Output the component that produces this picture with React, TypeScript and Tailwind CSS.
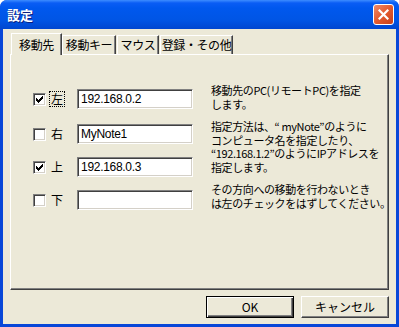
const FONT = { fontFamily: '"Noto Sans CJK JP", "Liberation Sans", sans-serif' };

interface Row {
  label: string;
  value: string;
  checked: boolean;
  focused?: boolean;
}

const ROWS: Row[] = [
  { label: "左", value: "192.168.0.2", checked: true, focused: true },
  { label: "右", value: "MyNote1", checked: false },
  { label: "上", value: "192.168.0.3", checked: true },
  { label: "下", value: "", checked: false },
];

const TABS = [
  { label: "移動先", width: "w-[51px]" },
  { label: "移動キー", width: "w-[54px]" },
  { label: "マウス", width: "w-[42px]" },
  { label: "登録・その他", width: "w-[73px]" },
];

function Check({ checked }: { checked: boolean }) {
  return (
    <div className="flex h-[13px] w-[13px] items-center justify-center border border-t-[#808080] border-l-[#808080] border-r-white border-b-white bg-white shadow-[inset_1px_1px_0_#404040,inset_-1px_-1px_0_#d4d0c8]">
      {checked ? (
        <svg width="7" height="7" viewBox="0 0 7 7" shapeRendering="crispEdges">
          <path d="M6 0h1v3h-1zM5 1h1v3h-1zM4 2h1v3h-1zM3 3h1v3h-1zM2 4h1v3h-1zM1 3h1v3h-1zM0 2h1v3h-1z" fill="#000" />
        </svg>
      ) : null}
    </div>
  );
}

function XpButton({ children, isDefault }: { children: string; isDefault?: boolean }) {
  return (
    <div
      className={[
        "flex h-[22px] w-[88px] items-center justify-center bg-[#ece9d8] text-[12px] text-black",
        isDefault
          ? "border border-black shadow-[inset_1px_1px_0_#fff,inset_-1px_-1px_0_#404040,inset_-2px_-2px_0_#808080]"
          : "border border-t-white border-l-white border-r-[#404040] border-b-[#404040] shadow-[inset_-1px_-1px_0_#808080]",
      ].join(" ")}
    >
      {children}
    </div>
  );
}

export default function App() {
  return (
    <div className="h-[327px] w-[399px] bg-white" style={FONT}>
      <div className="flex h-full w-full flex-col overflow-hidden rounded-t-[7px] bg-[#0847d8]">
        {/* title bar */}
        <div className="flex h-[29px] shrink-0 items-center justify-between bg-[linear-gradient(to_bottom,#3d8dff_0px,#0a5df5_3px,#0058ee_8px,#0055e5_20px,#0046d0_29px)] pl-[7px] pr-[5px]">
          <span className="text-[13px] font-bold text-white [text-shadow:1px_1px_0_#0a1e80]">設定</span>
          <div className="flex h-[21px] w-[21px] items-center justify-center rounded-[3px] border border-white bg-[linear-gradient(135deg,#f08a6a,#e35a2e_50%,#c8401a)]">
            <svg width="11" height="11" viewBox="0 0 11 11">
              <path d="M1.5 1.5l8 8M9.5 1.5l-8 8" stroke="#fff" strokeWidth="2.2" strokeLinecap="square" />
            </svg>
          </div>
        </div>

        {/* client */}
        <div className="mx-[3px] mb-[3px] flex flex-1 flex-col bg-[#ece9d8] px-[7px] text-[12px] text-black">
          <div className="flex h-[25px] items-end pl-[1px]">
            {TABS.map((tab, i) =>
              i === 0 ? (
                <div
                  key={tab.label}
                  className={[
                    "relative z-10 -mb-[1px] -mr-[1px] flex h-[22px] items-center justify-center whitespace-nowrap border border-b-0 border-t-white border-l-white border-r-[#404040] bg-[#ece9d8] text-[12px] leading-[14px] tracking-[-0.4px] shadow-[inset_-1px_0_0_#808080]",
                    tab.width,
                  ].join(" ")}
                >
                  {tab.label}
                </div>
              ) : (
                <div
                  key={tab.label}
                  className={[
                    "ml-[1px] flex h-[19px] items-center justify-center whitespace-nowrap border border-b-0 border-t-white border-l-white border-r-[#404040] text-[12px] leading-[14px] tracking-[-0.4px] shadow-[inset_-1px_0_0_#808080]",
                    tab.width,
                  ].join(" ")}
                >
                  {tab.label}
                </div>
              )
            )}
          </div>

          <div className="flex h-[236px] w-[379px] border border-t-white border-l-white border-r-[#404040] border-b-[#404040] shadow-[inset_-1px_-1px_0_#808080]">
            <div className="flex shrink-0 flex-col pl-[22px] pt-[34px]">
              {ROWS.map((row, i) => (
                <div key={row.label} className={["flex h-[20px] items-center", i === 0 ? "" : i === 1 ? "mt-[15px]" : "mt-[13px]"].join(" ")}>
                  <Check checked={row.checked} />
                  <span
                    className={[
                      "ml-[4px] px-[1px] leading-[14px]",
                      row.focused ? "outline outline-1 outline-dotted outline-black" : "",
                    ].join(" ")}
                  >
                    {row.label}
                  </span>
                  <div
                    className="ml-[13px] flex h-[20px] w-[116px] items-center border border-t-[#808080] border-l-[#808080] border-r-white border-b-white bg-white pl-[3px] text-[12px] tracking-[-0.3px] shadow-[inset_1px_1px_0_#404040,inset_-1px_-1px_0_#d4d0c8]"
                    style={{ fontFamily: '"Liberation Sans", sans-serif' }}
                  >
                    {row.value}
                  </div>
                </div>
              ))}
            </div>
            <div className="ml-[18px] flex flex-col gap-[9px] whitespace-nowrap pt-[29px] text-[11px] leading-[13.5px] tracking-[-0.4px]">
              <p>
                移動先のPC(リモートPC)を指定
                <br />
                します。
              </p>
              <p>
                指定方法は、“ myNote”のように
                <br />
                コンピュータ名を指定したり、
                <br />
                “192.168.1.2”のようにIPアドレスを
                <br />
                指定します。
              </p>
              <p>
                その方向への移動を行わないとき
                <br />
                は左のチェックをはずしてください。
              </p>
            </div>
          </div>

          <div className="flex flex-1 items-center justify-end gap-[7px] pb-[1px]">
            <XpButton isDefault>OK</XpButton>
            <XpButton>キャンセル</XpButton>
          </div>
        </div>
      </div>
    </div>
  );
}
